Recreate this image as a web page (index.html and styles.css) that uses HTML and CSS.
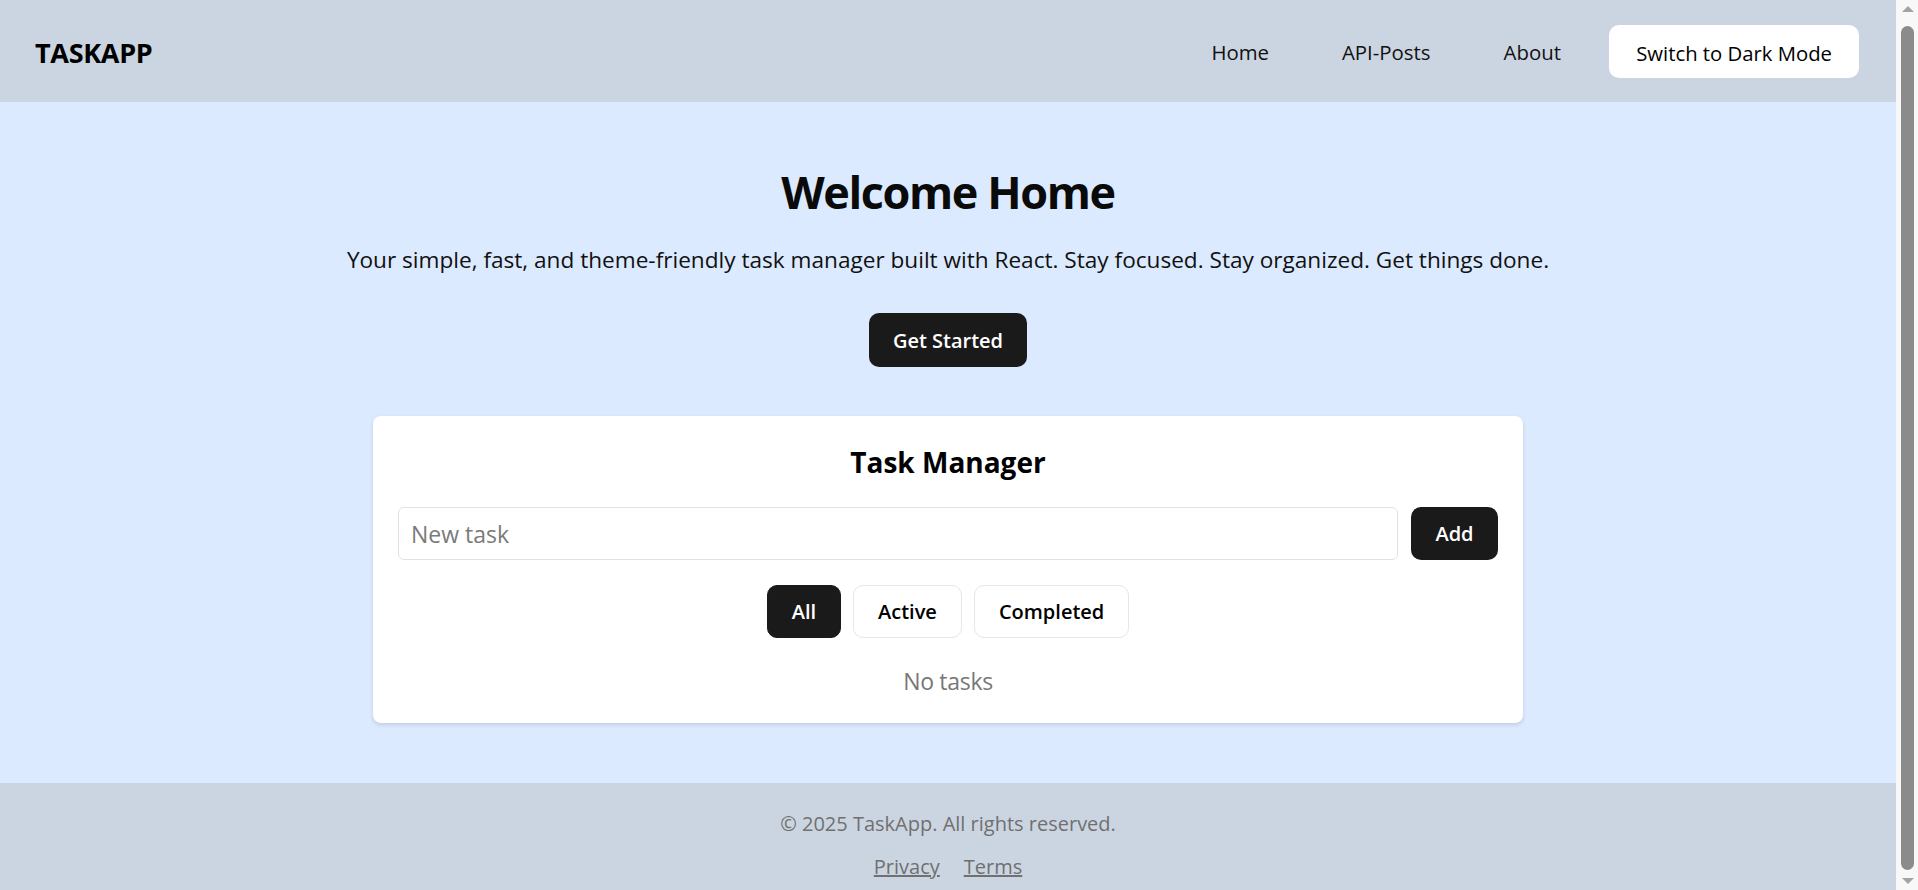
FILE: index.html
```html
<!DOCTYPE html>
<html lang="en">
<head>
<meta charset="utf-8">
<title>TaskApp</title>
<link rel="stylesheet" href="styles.css">
</head>
<body>
<div class="page">
  <header class="topbar">
    <div class="logo">TASKAPP</div>
    <nav class="nav">
      <a class="nav-link" href="#">Home</a>
      <a class="nav-link" href="#">API-Posts</a>
      <a class="nav-link" href="#">About</a>
      <button class="theme-btn" type="button">Switch to Dark Mode</button>
    </nav>
  </header>
  <main class="hero">
    <h1 class="hero-title">Welcome Home</h1>
    <p class="hero-text">Your simple, fast, and theme-friendly task manager built with React. Stay focused. Stay organized. Get things done.</p>
    <button class="btn-dark btn-start" type="button">Get Started</button>
    <section class="card">
      <h2 class="card-title">Task Manager</h2>
      <div class="add-row">
        <input class="task-input" type="text" placeholder="New task">
        <button class="btn-dark btn-add" type="button">Add</button>
      </div>
      <div class="filters">
        <button class="filter active" type="button">All</button>
        <button class="filter" type="button">Active</button>
        <button class="filter" type="button">Completed</button>
      </div>
      <p class="empty">No tasks</p>
    </section>
  </main>
  <footer class="footer">
    <p class="copyright">© 2025 TaskApp. All rights reserved.</p>
    <div class="footer-links">
      <a href="#" class="footer-link">Privacy</a>
      <a href="#" class="footer-link">Terms</a>
    </div>
  </footer>
</div>
<div class="scrollbar" aria-hidden="true">
  <span class="sb-arrow sb-up"></span>
  <span class="sb-track"><span class="sb-thumb"></span></span>
  <span class="sb-arrow sb-down"></span>
</div>
</body>
</html>
```
FILE: styles.css
```css
html {
  background: #cbd5e1;
}
body {
  margin: 0;
  display: flex;
  align-items: flex-start;
  font-family: "Open Sans", "Noto Sans", sans-serif;
  color: #111;
}
.page {
  flex: 1;
  min-width: 0;
}

/* window scrollbar */
.scrollbar {
  flex: none;
  width: 22px;
  height: 890px;
  display: flex;
  flex-direction: column;
  background: #f8f8f8;
}
.sb-arrow {
  flex: none;
  height: 18px;
  display: flex;
  justify-content: center;
  align-items: center;
  padding-left: 1px;
}
.sb-up::before,
.sb-down::before {
  content: "";
  width: 0;
  height: 0;
  border-left: 6px solid transparent;
  border-right: 6px solid transparent;
}
.sb-up::before {
  border-bottom: 6px solid #a3a3a3;
}
.sb-down::before {
  border-top: 6px solid #a3a3a3;
}
.sb-track {
  flex: 1;
  display: flex;
  padding: 8px 4px 2px 5px;
}
.sb-thumb {
  flex: 1;
  background: #8b8b8b;
  border-radius: 7px;
}

/* header */
.topbar {
  height: 102px;
  box-sizing: border-box;
  display: flex;
  align-items: center;
  justify-content: space-between;
  padding: 0 37px 0 35px;
  background: #cbd5e1;
}
.logo {
  padding-top: 3px;
  font-size: 27px;
  font-weight: 700;
  letter-spacing: -0.3px;
  color: #000;
}
.nav {
  display: flex;
  align-items: center;
}
.nav-link {
  width: 146px;
  padding-top: 2px;
  text-align: center;
  font-size: 20.4px;
  font-weight: 500;
  color: #111;
  text-decoration: none;
}
.theme-btn {
  margin-left: 4px;
  height: 53px;
  padding: 3px 27px 0;
  border: none;
  border-radius: 10px;
  background: #fff;
  color: #000;
  font-family: inherit;
  font-size: 20.3px;
  font-weight: 500;
}

/* hero */
.hero {
  background: #dbeafe;
  display: flex;
  flex-direction: column;
  align-items: center;
  padding: 61px 0 60px;
}
.hero-title {
  margin: 0;
  font-size: 45px;
  line-height: 58px;
  font-weight: 700;
  letter-spacing: -1.4px;
  color: #0a0a0a;
}
.hero-text {
  margin: 24px 0 0;
  font-size: 22.6px;
  line-height: 30px;
  color: #111;
}
.btn-dark {
  background: #1a1a1a;
  color: #fff;
  border: none;
  border-radius: 10px;
  font-family: inherit;
  font-size: 20px;
  font-weight: 600;
}
.btn-start {
  margin-top: 38px;
  height: 54px;
  padding: 0 24px;
}

/* task card */
.card {
  margin-top: 49px;
  width: 1150px;
  box-sizing: border-box;
  padding: 25px 25px 26px;
  background: #fff;
  border-radius: 8px;
  box-shadow: 0 2px 4px rgba(0, 0, 0, 0.12);
}
.card-title {
  margin: 0;
  text-align: center;
  font-size: 28px;
  line-height: 42px;
  font-weight: 700;
  color: #000;
}
.add-row {
  display: flex;
  gap: 13px;
  margin-top: 24px;
}
.task-input {
  flex: 1;
  height: 53px;
  box-sizing: border-box;
  border: 1px solid #e2e2e2;
  border-radius: 6px;
  padding: 0 12px;
  font-family: inherit;
  font-size: 23px;
  color: #111;
  outline: none;
}
.task-input::placeholder {
  color: #7a7a7a;
}
.btn-add {
  width: 87px;
  height: 53px;
}
.filters {
  display: flex;
  justify-content: center;
  gap: 12px;
  margin-top: 25px;
}
.filter {
  height: 53px;
  padding: 0 24px;
  border: 1px solid #e6e6e6;
  border-radius: 10px;
  background: #fff;
  color: #000;
  font-family: inherit;
  font-size: 20px;
  font-weight: 600;
}
.filter.active {
  background: #1a1a1a;
  border-color: #1a1a1a;
  color: #fff;
}
.empty {
  margin: 27px 0 0;
  text-align: center;
  font-size: 23px;
  line-height: 32px;
  letter-spacing: -0.3px;
  color: #777;
}

/* footer */
.footer {
  background: #cbd5e1;
  text-align: center;
  padding: 27px 0 21px;
  color: #707070;
  font-size: 20px;
  line-height: 28px;
}
.copyright {
  margin: 0;
}
.footer-links {
  margin-top: 15px;
  display: flex;
  justify-content: center;
  gap: 24px;
}
.footer-link {
  color: #707070;
  text-decoration: underline;
}
```
